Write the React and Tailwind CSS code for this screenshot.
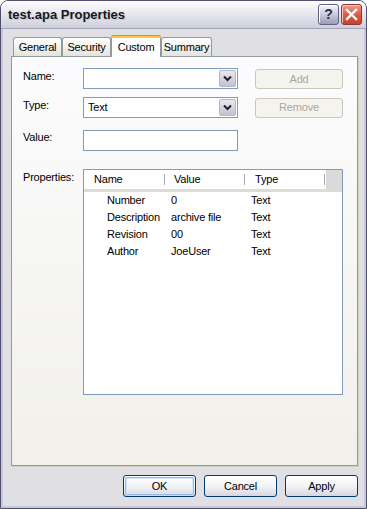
import React from 'react'

function Chevron() {
  return (
    <svg width="9" height="7" viewBox="0 0 9 7">
      <path d="M1 1.5 L4.5 5 L8 1.5" fill="none" stroke="#222" strokeWidth="2" />
    </svg>
  )
}

function Combo({ value }) {
  return (
    <div className="w-[155px] h-[21px] border border-[#7f9db9] bg-white flex items-center">
      <span className="flex-1 pl-[4px] text-[11px] text-black">{value}</span>
      <div className="w-[17px] h-[17px] mr-[1px] rounded-[2px] border border-[#b7b7c9] bg-gradient-to-b from-[#e8e8f0] to-[#c1c1d3] flex items-center justify-center">
        <Chevron />
      </div>
    </div>
  )
}

function DisabledButton({ children }) {
  return (
    <div className="w-[88px] h-[20px] rounded-[3px] border border-[#cac8bb] bg-[#f4f3ee] flex items-center justify-center text-[11px] text-[#aca899]">
      {children}
    </div>
  )
}

function Tab({ label, active, w }) {
  if (active) {
    return (
      <div
        className={`${w} h-[22px] -mb-[1px] rounded-t-[3px] border-x border-[#919b9c] bg-white relative z-10 flex flex-col`}
      >
        <div className="h-[3px] rounded-t-[3px] bg-[#ffc83c] border-t border-[#e68b2c] -mx-[1px]" />
        <div className="flex-1 flex items-center justify-center text-[11px] text-black">{label}</div>
      </div>
    )
  }
  return (
    <div
      className={`${w} h-[19px] rounded-t-[3px] border-x border-t border-[#919b9c] bg-gradient-to-b from-white to-[#e4e3dc] flex items-center justify-center text-[11px] text-black`}
    >
      {label}
    </div>
  )
}

function Button({ children, focused }) {
  return (
    <div className="w-[73px] h-[22px] rounded-[3px] border border-[#003c74] bg-gradient-to-b from-white via-[#f4f4f6] to-[#d6d6e0] flex items-center justify-center text-[11px] text-black">
      <div
        className={`w-[69px] h-[18px] rounded-[2px] flex items-center justify-center ${focused ? 'shadow-[inset_0_0_0_1px_#98b8ea,inset_0_0_0_2px_#cee7ff]' : ''}`}
      >
        {children}
      </div>
    </div>
  )
}

const rows = [
  ['Number', '0', 'Text'],
  ['Description', 'archive file', 'Text'],
  ['Revision', '00', 'Text'],
  ['Author', 'JoeUser', 'Text'],
]

export default function App() {
  return (
    <div className="w-[367px] h-[509px] font-['Liberation_Sans',Arial,sans-serif] tracking-[-0.2px] bg-white">
      <div className="w-[367px] h-[509px] flex flex-col rounded-t-[8px] border border-[#4f4f6f] bg-[#e0dfe3] overflow-hidden">
        {/* Title bar */}
        <div className="h-[28px] flex items-center bg-gradient-to-b from-[#fdfdfe] via-[#e6e6ee] to-[#cfcfdc] border-b border-[#a4a3b8] pl-[7px] pr-[4px]">
          <span className="flex-1 text-[13px] font-bold text-[#1a1a1a] tracking-[0px] [text-shadow:1px_1px_0_#c8c8d0]">
            test.apa Properties
          </span>
          <div className="w-[21px] h-[21px] rounded-[3px] border border-[#62627f] bg-gradient-to-b from-[#f6f6fa] via-[#c9c9db] to-[#9c9cb5] flex items-center justify-center text-[14px] font-bold text-[#2e2e40] shadow-[inset_1px_1px_0_#fff]">
            ?
          </div>
          <div className="w-[21px] h-[21px] ml-[2px] rounded-[3px] border border-[#8e3a34] bg-gradient-to-b from-[#f09a88] via-[#e05a45] to-[#c8412f] flex items-center justify-center shadow-[inset_1px_1px_0_#f8c6bc]">
            <svg width="13" height="13" viewBox="0 0 13 13">
              <path d="M2 2 L11 11 M11 2 L2 11" stroke="#fff" strokeWidth="2.4" strokeLinecap="square" />
            </svg>
          </div>
        </div>

        {/* Body */}
        <div className="flex-1 flex flex-col px-[8px] border-x-[2px] border-b-[2px] border-[#c9c8d6]">
          {/* Tabs */}
          <div className="flex items-end h-[27px] pl-[2px]">
            <Tab label="General" w="w-[49px]" />
            <Tab label="Security" w="w-[49px]" />
            <Tab label="Custom" w="w-[50px]" active />
            <Tab label="Summary" w="w-[51px]" />
          </div>

          {/* Panel */}
          <div className="w-[347px] h-[410px] border border-[#919b9c] bg-gradient-to-b from-[#fcfcfe] to-[#f1f0ea] shadow-[1px_1px_0_#d0d0bf] pl-[11px] pt-[10px]">
            <div className="flex items-center">
              <span className="w-[60px] text-[11px] text-black -mt-[3px]">Name:</span>
              <Combo value="" />
              <div className="ml-[17px] mt-[2px]">
                <DisabledButton>Add</DisabledButton>
              </div>
            </div>
            <div className="flex items-center mt-[8px]">
              <span className="w-[60px] text-[11px] text-black -mt-[4px]">Type:</span>
              <Combo value="Text" />
              <div className="ml-[17px]">
                <DisabledButton>Remove</DisabledButton>
              </div>
            </div>
            <div className="flex items-center mt-[12px]">
              <span className="w-[60px] text-[11px] text-black -mt-[6px]">Value:</span>
              <div className="w-[155px] h-[21px] border border-[#7f9db9] bg-white" />
            </div>
            <div className="flex mt-[18px]">
              <span className="w-[60px] text-[11px] text-black">Properties:</span>
              <div className="w-[260px] h-[226px] border border-[#7f9db9] bg-white flex flex-col">
                <div className="h-[22px] flex items-stretch border-b-[3px] border-[#dcdcd4] bg-white">
                  <div className="w-[80px] flex items-center pl-[10px] text-[11px] text-black">Name</div>
                  <div className="w-[1px] my-[4px] bg-[#aca8c0]" />
                  <div className="w-[79px] flex items-center pl-[9px] text-[11px] text-black">Value</div>
                  <div className="w-[1px] my-[4px] bg-[#aca8c0]" />
                  <div className="w-[79px] flex items-center pl-[10px] text-[11px] text-black">Type</div>
                  <div className="w-[1px] my-[4px] bg-[#aca8c0]" />
                  <div className="flex-1 ml-[1px] bg-[#dadada]" />
                </div>
                <div>
                  {rows.map(([n, v, t]) => (
                    <div key={n} className="h-[17px] flex items-center text-[11px] text-black">
                      <span className="w-[80px] pl-[23px] whitespace-nowrap">{n}</span>
                      <span className="w-[80px] pl-[7px] whitespace-nowrap">{v}</span>
                      <span className="pl-[7px]">{t}</span>
                    </div>
                  ))}
                </div>
              </div>
            </div>
          </div>

          {/* Buttons */}
          <div className="flex justify-end gap-[8px] mt-[9px] w-[347px]">
            <Button focused>OK</Button>
            <Button>Cancel</Button>
            <Button>Apply</Button>
          </div>
        </div>
      </div>
    </div>
  )
}
